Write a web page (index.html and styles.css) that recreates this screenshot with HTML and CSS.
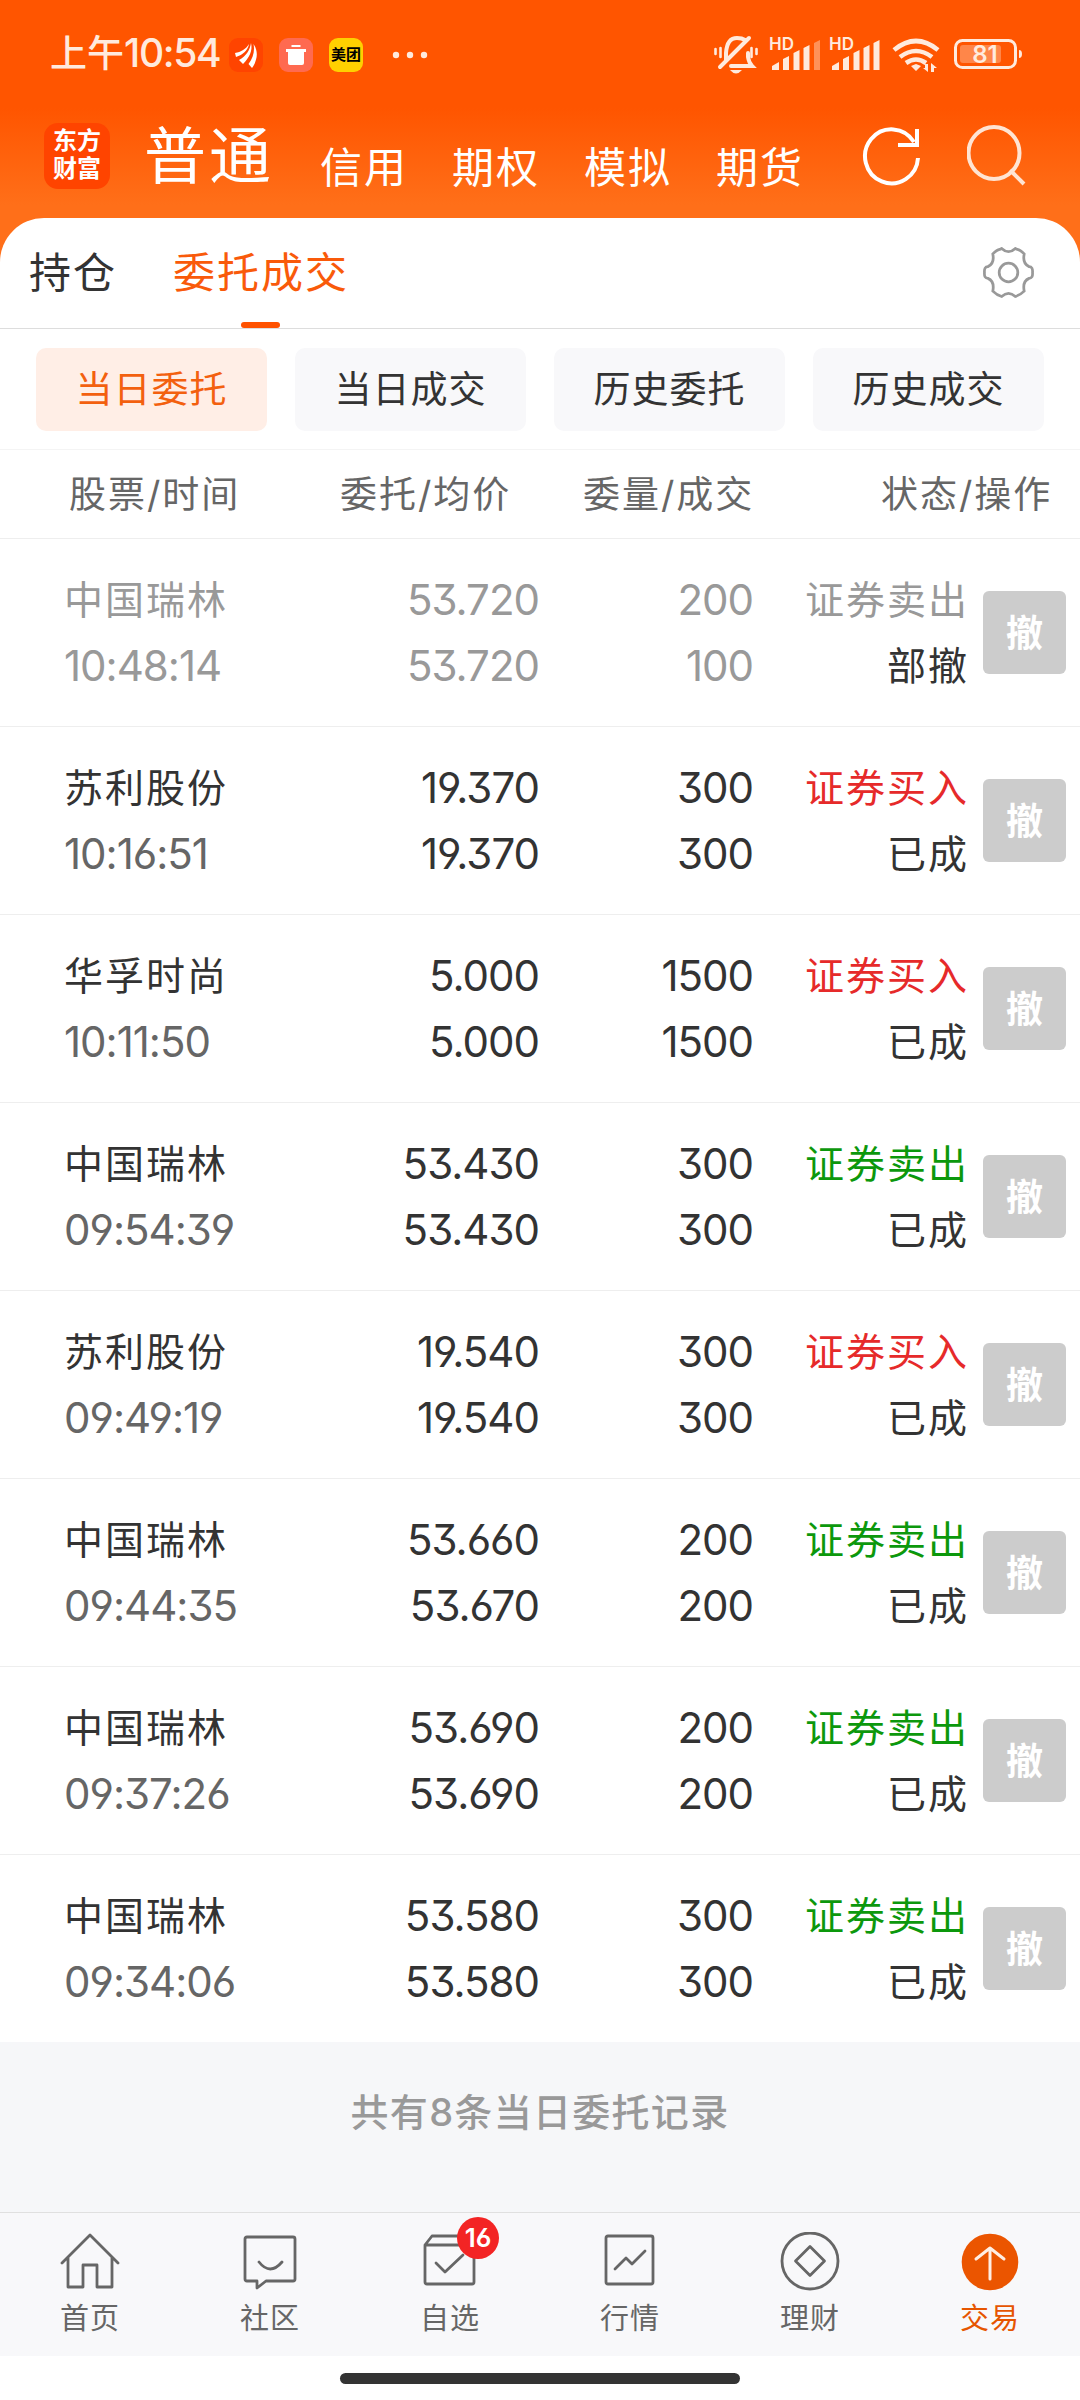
FILE: index.html
```html
<!DOCTYPE html>
<html lang="zh-CN">
<head>
    <meta charset="UTF-8">
    <meta name="viewport" content="width=device-width, initial-scale=1.0">
    <title>委托成交</title>
    <link rel="stylesheet" href="styles.css">
</head>
<body>
    <header class="top">
        <div class="status-bar">
            <span class="clock">上午<span class="clock-num">10:54</span></span>
            <svg class="app-icon" viewBox="0 0 34 34">
                <rect width="34" height="34" rx="9" fill="#ff4400"/>
                <path d="M6 15C12 14 17 11 20 6C19 12 14 17 7 19Z" fill="#fff"/>
                <path d="M10 22C17 18 21 12 22 5C24 13 20 20 14 26Z" fill="#fff"/>
                <path d="M24.500 6C30 14 28 23 23 30L19.500 26C24 20 26 13 24.500 6Z" fill="#fff"/>
            </svg>
            <svg class="app-icon" viewBox="0 0 34 34">
                <rect width="34" height="34" rx="9" fill="#ff6a50"/>
                <path d="M12.500 7h9v2h-9zM7 11h20v3h-2v11q0 2-2 2H11q-2 0-2-2V14H7z" fill="#fff"/>
            </svg>
            <span class="app-icon app-meituan">美团</span>
            <svg class="more" viewBox="0 0 36 8"><circle cx="4" cy="4" r="3.2"/><circle cx="18" cy="4" r="3.2"/><circle cx="32" cy="4" r="3.2"/></svg>
            <svg class="sys-icons" viewBox="710 30 320 50">
                <g fill="none" stroke="#ffeadd" stroke-width="4" stroke-linecap="round">
                    <path d="M726 60V53q1-15 11-15q5 0 8 2M748 53v4q1 6 4 9h-21M720 67L749 38"/>
                    <path d="M715.500 49v5M720.500 48v9M751.500 48v9M756.500 49v5" stroke-width="2.600"/>
                </g>
                <path d="M730 70h12q-6 7-12 0z" fill="#ffeadd"/>
                <text class="hd" x="769" y="50">HD</text>
                <text class="hd" x="829" y="50">HD</text>
                <g fill="#ffeadd">
                    <path d="M772 66l7-4v8h-7zM783 59l6-3v14h-6zM793.500 53l6-3v20h-6zM803.500 48l6-3v25h-6z"/>
                    <path d="M814 43l6-3v30h-6z" opacity=".4"/>
                    <path d="M832 66l7-4v8h-7zM843 59l6-3v14h-6zM853.500 53l6-3v20h-6zM863.500 48l6-3v25h-6zM873.500 43l6-3v30h-6z"/>
                    <path d="M911 66l5-2 5 2-5 5zM925 64h3v8l-5-4h2zM931 72v-9l6 5h-3v4z"/>
                </g>
                <g fill="none" stroke="#ffeadd" stroke-width="4.6">
                    <path d="M894 50q22-18 44 0M900 57q16-12 32 0M906 63q10-7 20 0"/>
                </g>
                <rect x="955.500" y="40.500" width="60" height="27" rx="7" fill="none" stroke="#ffeadd" stroke-width="3"/>
                <rect x="960" y="45" width="41" height="18" rx="3" fill="#ff8649"/>
                <path d="M1019 50q3 0 3 4q0 4-3 4z" fill="#ffeadd"/>
                <text class="battery-text" x="985" y="63">81</text>
            </svg>
        </div>
        <nav class="main-nav">
            <div class="logo">东方<br>财富</div>
            <span class="nav-current">普通</span>
            <span class="nav-link">信用</span>
            <span class="nav-link">期权</span>
            <span class="nav-link">模拟</span>
            <span class="nav-link">期货</span>
            <svg class="refresh" viewBox="0 0 60 60"><path d="M56 32A26.500 27 0 1 1 52 16M55 3v16H36" fill="none" stroke="#fff" stroke-width="4"/></svg>
            <svg class="search" viewBox="0 0 60 62"><ellipse cx="27" cy="28" rx="25.500" ry="26" fill="none" stroke="#ffe4d3" stroke-width="4"/><path d="M43 45L57 59" stroke="#ffe4d3" stroke-width="4"/></svg>
        </nav>
    </header>

    <main class="sheet">
        <div class="tabs">
            <span class="tab">持仓</span>
            <span class="tab tab-active">委托成交</span>
            <svg class="gear" viewBox="0 0 52 52">
                <path d="M17 2.500L19 1.500Q26 8 33 1.500L35 2.500Q38 3 42 7Q40 17 47 20Q51 20 50.500 26Q51 32 47 32Q40 35 42 45Q38 49 33 50.500Q26 44 19 50.500Q14 49 10 45Q12 35 5 32Q1 32 1.500 26Q1 20 5 20Q12 17 10 7Q14 3 17 2.500Z"/>
                <circle cx="26" cy="26" r="9.500"/>
            </svg>
        </div>
        <div class="chips">
            <span class="chip chip-active">当日委托</span>
            <span class="chip">当日成交</span>
            <span class="chip">历史委托</span>
            <span class="chip">历史成交</span>
        </div>
        <div class="list-head">
            <span>股票/时间</span>
            <span>委托/均价</span>
            <span>委量/成交</span>
            <span>状态/操作</span>
        </div>
        <div class="row cancelled">
            <div class="stock">中国瑞林<br><span class="time">10:48:14</span></div>
            <div class="num">53.720<br>53.720</div>
            <div class="num">200<br>100</div>
            <div class="state"><span class="sell">证券卖出</span><br>部撤</div>
            <button class="cancel">撤</button>
        </div>
        <div class="row">
            <div class="stock">苏利股份<br><span class="time">10:16:51</span></div>
            <div class="num">19.370<br>19.370</div>
            <div class="num">300<br>300</div>
            <div class="state"><span class="buy">证券买入</span><br>已成</div>
            <button class="cancel">撤</button>
        </div>
        <div class="row">
            <div class="stock">华孚时尚<br><span class="time">10:11:50</span></div>
            <div class="num">5.000<br>5.000</div>
            <div class="num">1500<br>1500</div>
            <div class="state"><span class="buy">证券买入</span><br>已成</div>
            <button class="cancel">撤</button>
        </div>
        <div class="row">
            <div class="stock">中国瑞林<br><span class="time">09:54:39</span></div>
            <div class="num">53.430<br>53.430</div>
            <div class="num">300<br>300</div>
            <div class="state"><span class="sell">证券卖出</span><br>已成</div>
            <button class="cancel">撤</button>
        </div>
        <div class="row">
            <div class="stock">苏利股份<br><span class="time">09:49:19</span></div>
            <div class="num">19.540<br>19.540</div>
            <div class="num">300<br>300</div>
            <div class="state"><span class="buy">证券买入</span><br>已成</div>
            <button class="cancel">撤</button>
        </div>
        <div class="row">
            <div class="stock">中国瑞林<br><span class="time">09:44:35</span></div>
            <div class="num">53.660<br>53.670</div>
            <div class="num">200<br>200</div>
            <div class="state"><span class="sell">证券卖出</span><br>已成</div>
            <button class="cancel">撤</button>
        </div>
        <div class="row">
            <div class="stock">中国瑞林<br><span class="time">09:37:26</span></div>
            <div class="num">53.690<br>53.690</div>
            <div class="num">200<br>200</div>
            <div class="state"><span class="sell">证券卖出</span><br>已成</div>
            <button class="cancel">撤</button>
        </div>
        <div class="row">
            <div class="stock">中国瑞林<br><span class="time">09:34:06</span></div>
            <div class="num">53.580<br>53.580</div>
            <div class="num">300<br>300</div>
            <div class="state"><span class="sell">证券卖出</span><br>已成</div>
            <button class="cancel">撤</button>
        </div>
    </main>

    <p class="summary">共有8条当日委托记录</p>

    <nav class="tab-bar">
        <div class="item">
            <svg class="item-icon" viewBox="0 0 60 60"><path d="M2 31L30 3L58 31M8 26V55H23V33H37V55H52V26"/></svg>
            首页
        </div>
        <div class="item">
            <svg class="item-icon" viewBox="0 0 60 60"><path d="M7 5H53Q55 5 55 7V47Q55 49 53 49H26L17 56V49H7Q5 49 5 47V7Q5 5 7 5ZM19 30Q30 44 42 30"/></svg>
            社区
        </div>
        <div class="item">
            <svg class="item-icon" viewBox="0 0 60 60"><path d="M5 13H54V50Q54 52 52 52H7Q5 52 5 50V13L12 4H47L54 13M16 31L25 40L43 23"/></svg>
            <span class="badge">16</span>
            自选
        </div>
        <div class="item">
            <svg class="item-icon" viewBox="0 0 60 60"><path d="M8 4H51Q53 4 53 6V50Q53 52 51 52H8Q6 52 6 50V6Q6 4 8 4ZM15 37L26 26L32 32L45 19"/></svg>
            行情
        </div>
        <div class="item">
            <svg class="item-icon" viewBox="0 0 60 60"><circle cx="30" cy="29" r="28"/><path d="M30 14.500L44.500 29L30 43.500L15.500 29Z"/></svg>
            理财
        </div>
        <div class="item item-active">
            <svg class="item-icon" viewBox="0 0 60 60"><circle class="disc" cx="30" cy="30" r="28.300"/><path class="arrow" d="M30 47V16M16 27L30 16L44 27"/></svg>
            交易
        </div>
    </nav>
    <div class="home-indicator"><span class="home-bar"></span></div>
</body>
</html>
```
FILE: styles.css
```css
* {
    box-sizing: border-box;
}
body {
    font-family: Inter, "Noto Sans CJK SC", sans-serif;
    font-feature-settings: "cv03", "cv04", "cv09", "calt" 0;
    margin: 0;
    padding: 0;
    color: #333;
    background: #f6f7f9;
}
.top {
    height: 262px;
    margin-bottom: -44px;
    background: linear-gradient(#ff5500 108px, #ff6f19 205px);
}
.status-bar {
    display: flex;
    align-items: center;
    height: 109px;
    padding: 0 50px;
    color: #ffeadd;
}
.clock {
    width: 179px;
    font-size: 37px;
    font-weight: 500;
    line-height: 50px;
    margin-top: -3px;
    white-space: nowrap;
}
.clock-num {
    font-size: 39px;
    letter-spacing: -1.3px;
}
.app-icon {
    width: 34px;
    height: 34px;
    margin-right: 16px;
}
.app-meituan {
    border-radius: 9px;
    background: #ffd000;
    color: #000;
    font-size: 15px;
    font-weight: 700;
    line-height: 33px;
    text-align: center;
}
.more {
    width: 36px;
    height: 8px;
    margin-left: 13px;
    fill: #ffeadd;
}
.sys-icons {
    width: 320px;
    height: 50px;
    margin-left: auto;
}
.hd {
    fill: #ffeadd;
    font-size: 17px;
    font-weight: 600;
}
.battery-text {
    fill: #ffeadd;
    font-size: 24px;
    font-weight: 600;
    text-anchor: middle;
}
.main-nav {
    display: flex;
    align-items: center;
    height: 94px;
    padding-left: 44px;
    color: #fff;
}
.logo {
    width: 66px;
    height: 66px;
    margin-right: 34px;
    padding-top: 4px;
    border-radius: 14px;
    background: #ff4400;
    font-size: 24px;
    font-weight: 700;
    line-height: 28px;
    text-align: center;
}
.nav-current {
    width: 176px;
    padding-top: 2px;
    font-size: 62px;
    letter-spacing: 3px;
    line-height: 90px;
}
.nav-link {
    width: 132px;
    padding-top: 16px;
    font-size: 42px;
    letter-spacing: 2px;
}
.refresh {
    width: 60px;
    height: 60px;
    margin-left: 14px;
}
.search {
    width: 60px;
    height: 62px;
    margin-left: 45px;
}
.sheet {
    border-radius: 44px 44px 0 0;
    background: #fff;
}
.tabs {
    display: flex;
    height: 111px;
    padding: 0 46px 0 29px;
    border-bottom: 1px solid #ddd;
}
.tab {
    position: relative;
    margin-right: 56px;
    font-size: 42px;
    letter-spacing: 2px;
    line-height: 109px;
}
.tab-active {
    color: #f95a0a;
}
.tab-active::after {
    content: "";
    position: absolute;
    left: 68px;
    bottom: 0;
    width: 39px;
    height: 6px;
    border-radius: 3px;
    background: #ff5200;
}
.gear {
    width: 51px;
    height: 51px;
    margin: 29px 0 0 auto;
    fill: none;
    stroke: #999;
    stroke-width: 2.8;
}
.chips {
    display: flex;
    gap: 28px;
    height: 121px;
    padding: 19px 36px;
    border-bottom: 1px solid #f4f4f4;
}
.chip {
    width: 231px;
    height: 83px;
    border-radius: 10px;
    background: #f8f8fa;
    font-size: 37px;
    letter-spacing: 1px;
    line-height: 84px;
    text-align: center;
}
.chip-active {
    background: #ffeee6;
    color: #f3600f;
}
.list-head {
    display: grid;
    grid-template-columns: 271px 243px 298px 1fr;
    height: 89px;
    padding-left: 69px;
    border-bottom: 1px solid #eee;
    color: #666;
    font-size: 37px;
    letter-spacing: 2px;
    line-height: 89px;
}
.row {
    display: grid;
    grid-template-columns: 254px 221px 214px 216px 83px;
    height: 188px;
    padding: 28px 0 0 64px;
    border-bottom: 1px solid #eee;
    font-size: 42px;
    line-height: 66px;
}
.row:last-child {
    border-bottom: 0;
    height: 187px;
}
.stock,
.state {
    font-size: 39px;
    letter-spacing: 2px;
}
.time {
    color: #666;
    font-size: 42px;
    letter-spacing: -1px;
}
.num,
.state {
    text-align: right;
}
.num {
    letter-spacing: -1px;
}
.cancelled .stock,
.cancelled .num,
.cancelled .time,
.cancelled .sell {
    color: #999;
}
.buy {
    color: #e62a2a;
}
.sell {
    color: #0c980c;
}
.cancel {
    height: 83px;
    margin: 24px 0 0 14px;
    width: 83px;
    padding: 0 0 4px;
    border: 0;
    border-radius: 6px;
    background: #ccc;
    color: #fff;
    font-family: inherit;
    font-size: 37px;
    font-weight: 600;
}
.summary {
    height: 170px;
    margin: 0;
    color: #999;
    font-size: 38px;
    font-weight: 500;
    letter-spacing: 1.3px;
    line-height: 140px;
    text-align: center;
}
.tab-bar {
    display: grid;
    grid-template-columns: repeat(6, 1fr);
    height: 144px;
    padding-top: 19px;
    border-top: 1px solid #e0e0e0;
    background: #f8f8fa;
}
.item {
    position: relative;
    display: flex;
    flex-direction: column;
    align-items: center;
    color: #666;
    font-size: 29px;
    letter-spacing: 1px;
    line-height: 50px;
}
.item-icon {
    width: 60px;
    height: 60px;
    margin-bottom: 2px;
    fill: none;
    stroke: #666;
    stroke-width: 2.8;
    stroke-linecap: round;
    stroke-linejoin: round;
}
.badge {
    position: absolute;
    left: 97px;
    top: -15px;
    width: 42px;
    height: 42px;
    border-radius: 50%;
    background: #f32424;
    color: #fff;
    font-size: 26px;
    font-weight: 600;
    letter-spacing: 0;
    line-height: 41px;
    text-align: center;
}
.item-active {
    color: #e65500;
}
.disc {
    fill: #eb5500;
    stroke: none;
}
.arrow {
    stroke: #ffeee4;
    stroke-width: 3;
}
.home-indicator {
    display: flex;
    justify-content: center;
    height: 44px;
    padding-top: 17px;
    background: #fff;
}
.home-bar {
    width: 400px;
    height: 11px;
    border-radius: 6px;
    background: #333;
}
```
